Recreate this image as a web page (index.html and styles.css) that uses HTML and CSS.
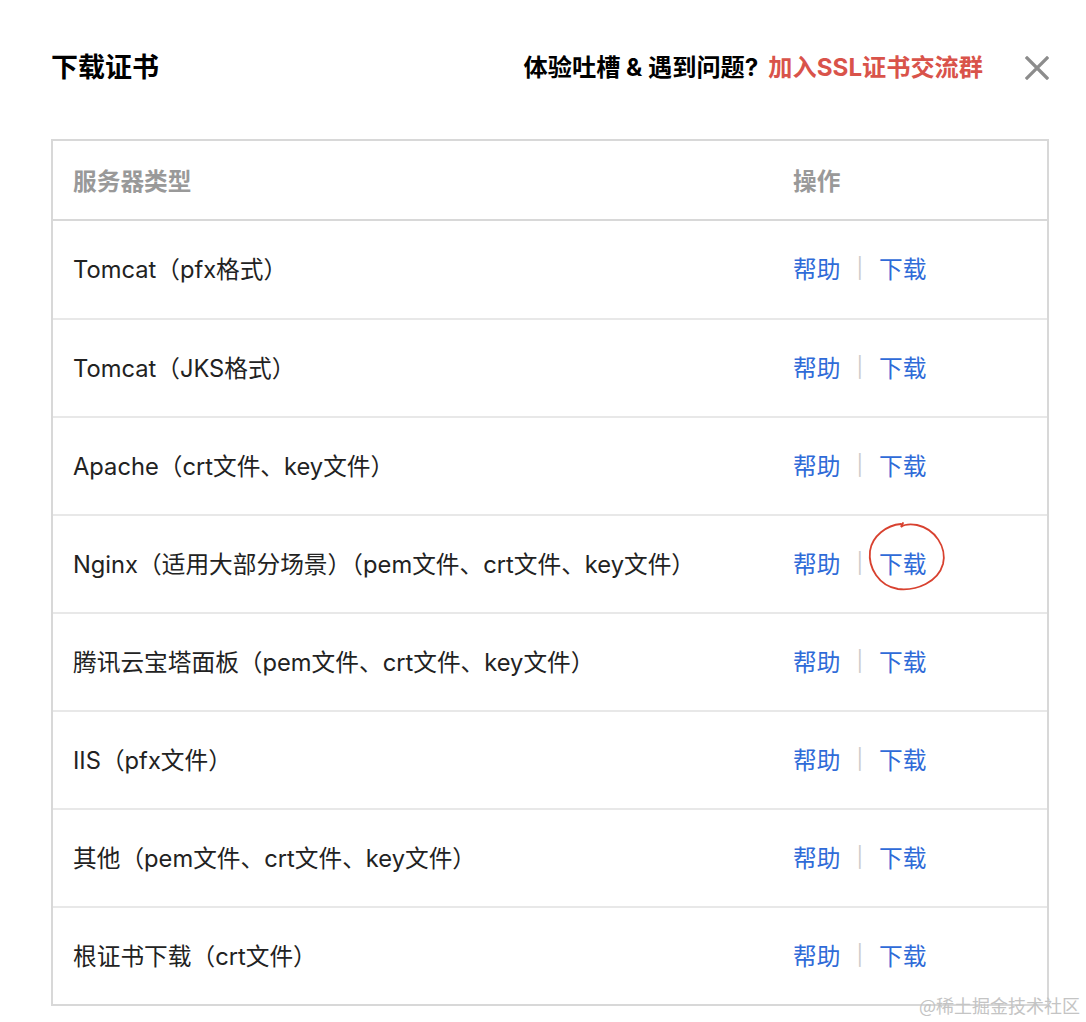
FILE: index.html
```html
<!DOCTYPE html>
<html lang="zh">
<head>
<meta charset="utf-8">
<link rel="stylesheet" href="styles.css">
</head>
<body>
<div class="dialog">
  <div class="head">
    <h1 class="title">下载证书</h1>
    <div class="head-right">
      <span class="feedback">体验吐槽 &amp; 遇到问题?</span>
      <a class="join">加入SSL证书交流群</a>
      <span class="close">
        <svg width="24" height="24" viewBox="0 0 24 24"><path d="M2 2 L22 22 M22 2 L2 22" stroke="#8c8c8c" stroke-width="3.2" stroke-linecap="square"/></svg>
      </span>
    </div>
  </div>
  <div class="table">
    <div class="row thead"><div class="c1">服务器类型</div><div class="c2">操作</div></div>
    <div class="row"><div class="c1">Tomcat（pfx格式）</div><div class="c2"><a>帮助</a><span class="sep">|</span><a>下载</a></div></div>
    <div class="row"><div class="c1">Tomcat（JKS格式）</div><div class="c2"><a>帮助</a><span class="sep">|</span><a>下载</a></div></div>
    <div class="row"><div class="c1">Apache（crt文件、key文件）</div><div class="c2"><a>帮助</a><span class="sep">|</span><a>下载</a></div></div>
    <div class="row"><div class="c1">Nginx（适用大部分场景）（pem文件、crt文件、key文件）</div><div class="c2"><a>帮助</a><span class="sep">|</span><a class="marked">下载<svg class="circle" width="82" height="74" viewBox="0 0 82 74"><path d="M34 5 C20 6 5 17 3 32 C1 49 12 67 31 70 C50 72 71 63 76 45 C80 28 68 10 50 6 C44 5 38 5 34 8 L36 4" fill="none" stroke="#d8412f" stroke-width="1.8" stroke-linecap="round"/></svg></a></div></div>
    <div class="row"><div class="c1">腾讯云宝塔面板（pem文件、crt文件、key文件）</div><div class="c2"><a>帮助</a><span class="sep">|</span><a>下载</a></div></div>
    <div class="row"><div class="c1">IIS（pfx文件）</div><div class="c2"><a>帮助</a><span class="sep">|</span><a>下载</a></div></div>
    <div class="row"><div class="c1">其他（pem文件、crt文件、key文件）</div><div class="c2"><a>帮助</a><span class="sep">|</span><a>下载</a></div></div>
    <div class="row"><div class="c1">根证书下载（crt文件）</div><div class="c2"><a>帮助</a><span class="sep">|</span><a>下载</a></div></div>
  </div>
  <div class="watermark">@稀土掘金技术社区</div>
</div>
</body>
</html>
```
FILE: styles.css
```css
* { box-sizing: border-box; }
html, body { margin: 0; padding: 0; background: #fff; }
body {
  font-family: Inter, "Noto Sans CJK SC", sans-serif;
  color: #1f1f1f;
  width: 1086px;
  height: 1022px;
  overflow: hidden;
}
.dialog {
  position: relative;
  padding: 0 37px 0 51px;
  height: 1022px;
}
.head {
  display: flex;
  justify-content: space-between;
  align-items: center;
  height: 139px;
  padding-bottom: 4px;
}
.title {
  margin: 0;
  font-size: 27px;
  font-weight: bold;
  color: #000;
  margin-top: -5px;
}
.head-right {
  display: flex;
  align-items: center;
  font-size: 24.2px;
  font-weight: bold;
  margin-top: -4px;
}
.feedback { color: #000; }
.join { color: #d9534a; margin-left: 10px; }
.close { display: flex; margin-left: 42px; margin-top: 4px; }
.table {
  width: 998px;
  border: 2px solid #d8d8d8;
}
.row {
  display: flex;
  align-items: center;
  height: 98px;
  border-top: 2px solid #e8e8e8;
  font-size: 23.7px;
  color: #222;
  padding-bottom: 3px;
}
.row.thead {
  height: 79px;
  border-top: none;
  border-bottom: 1px solid #d8d8d8;
  color: #999;
  font-weight: bold;
  padding-bottom: 1px;
}
.row.thead + .row { border-top: 1px solid #d8d8d8; }
.c1 { width: 740px; padding-left: 20px; }
.c2 { display: flex; align-items: center; }
.c2 a { color: #2f6bd8; position: relative; }
.sep { color: #ccc; margin: 0 16px 0 16px; font-size: 20px; }
.circle { position: absolute; left: -12px; top: -27px; }
.watermark {
  position: absolute;
  right: 6px;
  top: 992px;
  font-family: "Noto Sans CJK SC", sans-serif;
  font-size: 18px;
  color: #c4c4c4;
}
```
